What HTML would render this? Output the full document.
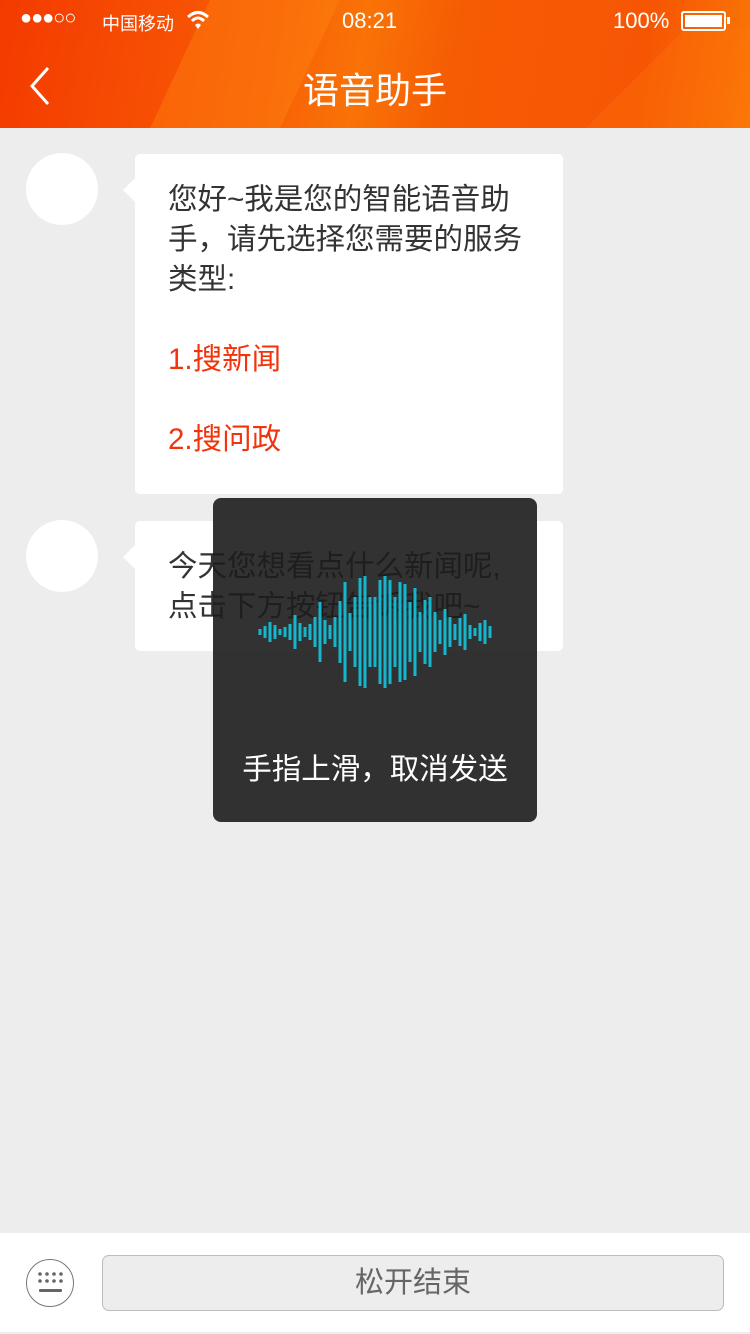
<!DOCTYPE html>
<html><head><meta charset="utf-8"><style>
*{margin:0;padding:0;box-sizing:border-box}
body{width:750px;height:1334px;background:#ededed;font-family:"Liberation Sans","Noto Sans CJK SC",sans-serif;position:relative;overflow:hidden}
.hdr{position:absolute;left:0;top:0;width:750px;height:128px;background:linear-gradient(100deg,#f43a00 0%,#f85c05 35%,#f97306 48%,#f65c04 60%,#f65604 85%,#f97806 100%);overflow:hidden}
.hdr .s1{position:absolute;left:180px;top:0;width:130px;height:128px;background:rgba(255,140,20,0.35);transform:skewX(-25deg)}
.hdr .s2{position:absolute;left:620px;top:30px;width:200px;height:128px;background:rgba(255,120,10,0.3);transform:skewX(-45deg)}
.st{position:absolute;top:8px;color:#fff;font-size:22px}
.title{position:absolute;top:62px;width:750px;text-align:center;color:#fff;font-size:36px}
.av{position:absolute;left:26px;width:72px;height:72px;border-radius:50%;background:#fff}
.bub{position:absolute;left:135px;width:428px;background:#fff;border-radius:5px;padding:26px 10px 26px 33px;font-size:29.5px;line-height:40px;color:#333;white-space:nowrap}
.bub:before{content:"";position:absolute;left:-12px;top:24px;border:12px solid transparent;border-left:0;border-right-color:#fff}
.red{color:#f2330c}
.ov{position:absolute;left:213px;top:498px;width:324px;height:324px;border-radius:8px;background:rgba(28,28,28,0.9)}
.ov .t{position:absolute;top:248px;width:324px;text-align:center;color:#fff;font-size:29.5px}
.bot{position:absolute;left:0;top:1233px;width:750px;height:99px;background:#fff}
.btn{position:absolute;left:102px;top:22px;width:622px;height:56px;border:1px solid #bcbcbc;border-radius:7px;background:#ededed;text-align:center;line-height:54px;font-size:29px;color:#666}
</style></head><body>
<div class="hdr"><div class="s1"></div><div class="s2"></div>
<div class="st" style="left:20px;top:7px;font-size:20px;letter-spacing:-1px">●●●○○</div>
<div class="st" style="left:102px;top:10px;font-size:18px">中国移动</div>
<svg style="position:absolute;left:186px;top:10px" width="24" height="20" viewBox="0 0 24 20"><path d="M2 7 Q12 -2 22 7" stroke="#fff" stroke-width="3" fill="none"/><path d="M6 11 Q12 5 18 11" stroke="#fff" stroke-width="3" fill="none"/><path d="M9 15 L12 19 L15 15 Q12 12 9 15Z" fill="#fff"/></svg>
<div class="st" style="left:342px">08:21</div>
<div class="st" style="left:613px">100%</div>
<div style="position:absolute;left:681px;top:11px;width:45px;height:20px;border:2px solid #fff;border-radius:3px;padding:2px"><div style="width:100%;height:100%;background:#fff"></div></div>
<div style="position:absolute;left:727px;top:17px;width:3px;height:7px;background:#fff"></div>
<svg style="position:absolute;left:28px;top:66px" width="24" height="40"><path d="M20 2 L4 20 L20 38" stroke="#fff" stroke-width="3" fill="none"/></svg>
<div class="title">语音助手</div>
</div>
<div class="av" style="top:153px"></div>
<div class="bub" style="top:154px;height:340px">您好~我是您的智能语音助<br>手，请先选择您需要的服务<br>类型:<br><br><span class="red">1.搜新闻</span><br><br><span class="red">2.搜问政</span></div>
<div class="av" style="top:520px"></div>
<div class="bub" style="top:521px;height:130px">今天您想看点什么新闻呢,<br>点击下方按钮告诉我吧~</div>
<div class="ov"><div class="t">手指上滑，取消发送</div></div>
<svg style="position:absolute;left:255px;top:572px" width="240" height="120"><g stroke="#17b6cf" stroke-width="3">
<line x1="5" y1="57" x2="5" y2="63"/><line x1="10" y1="54" x2="10" y2="66"/><line x1="15" y1="50" x2="15" y2="70"/><line x1="20" y1="53" x2="20" y2="67"/><line x1="25" y1="57" x2="25" y2="63"/><line x1="30" y1="55" x2="30" y2="65"/><line x1="35" y1="52" x2="35" y2="68"/><line x1="40" y1="43" x2="40" y2="77"/><line x1="45" y1="51" x2="45" y2="69"/><line x1="50" y1="55" x2="50" y2="65"/><line x1="55" y1="52" x2="55" y2="68"/><line x1="60" y1="45" x2="60" y2="75"/><line x1="65" y1="30" x2="65" y2="90"/><line x1="70" y1="48" x2="70" y2="72"/><line x1="75" y1="53" x2="75" y2="67"/><line x1="80" y1="45" x2="80" y2="75"/><line x1="85" y1="29" x2="85" y2="91"/><line x1="90" y1="10" x2="90" y2="110"/><line x1="95" y1="41" x2="95" y2="79"/><line x1="100" y1="25" x2="100" y2="95"/><line x1="105" y1="6" x2="105" y2="114"/><line x1="110" y1="4" x2="110" y2="116"/><line x1="115" y1="25" x2="115" y2="95"/><line x1="120" y1="25" x2="120" y2="95"/><line x1="125" y1="8" x2="125" y2="112"/><line x1="130" y1="4" x2="130" y2="116"/><line x1="135" y1="8" x2="135" y2="112"/><line x1="140" y1="25" x2="140" y2="95"/><line x1="145" y1="10" x2="145" y2="110"/><line x1="150" y1="12" x2="150" y2="108"/><line x1="155" y1="30" x2="155" y2="90"/><line x1="160" y1="16" x2="160" y2="104"/><line x1="165" y1="40" x2="165" y2="80"/><line x1="170" y1="28" x2="170" y2="92"/><line x1="175" y1="25" x2="175" y2="95"/><line x1="180" y1="40" x2="180" y2="80"/><line x1="185" y1="48" x2="185" y2="72"/><line x1="190" y1="37" x2="190" y2="83"/><line x1="195" y1="45" x2="195" y2="75"/><line x1="200" y1="52" x2="200" y2="68"/><line x1="205" y1="46" x2="205" y2="74"/><line x1="210" y1="42" x2="210" y2="78"/><line x1="215" y1="53" x2="215" y2="67"/><line x1="220" y1="56" x2="220" y2="64"/><line x1="225" y1="51" x2="225" y2="69"/><line x1="230" y1="48" x2="230" y2="72"/><line x1="235" y1="54" x2="235" y2="66"/>
</g></svg>
<div class="bot">
<div style="position:absolute;left:26px;top:26px;width:48px;height:48px;border:1.5px solid #777;border-radius:50%"></div>
<svg style="position:absolute;left:36px;top:38px" width="30" height="24"><g fill="#666"><circle cx="4" cy="3" r="1.8"/><circle cx="11" cy="3" r="1.8"/><circle cx="18" cy="3" r="1.8"/><circle cx="25" cy="3" r="1.8"/><circle cx="4" cy="10" r="1.8"/><circle cx="11" cy="10" r="1.8"/><circle cx="18" cy="10" r="1.8"/><circle cx="25" cy="10" r="1.8"/><rect x="3" y="18" width="23" height="3" rx="1"/></g></svg>
<div class="btn">松开结束</div>
</div>
</body></html>
